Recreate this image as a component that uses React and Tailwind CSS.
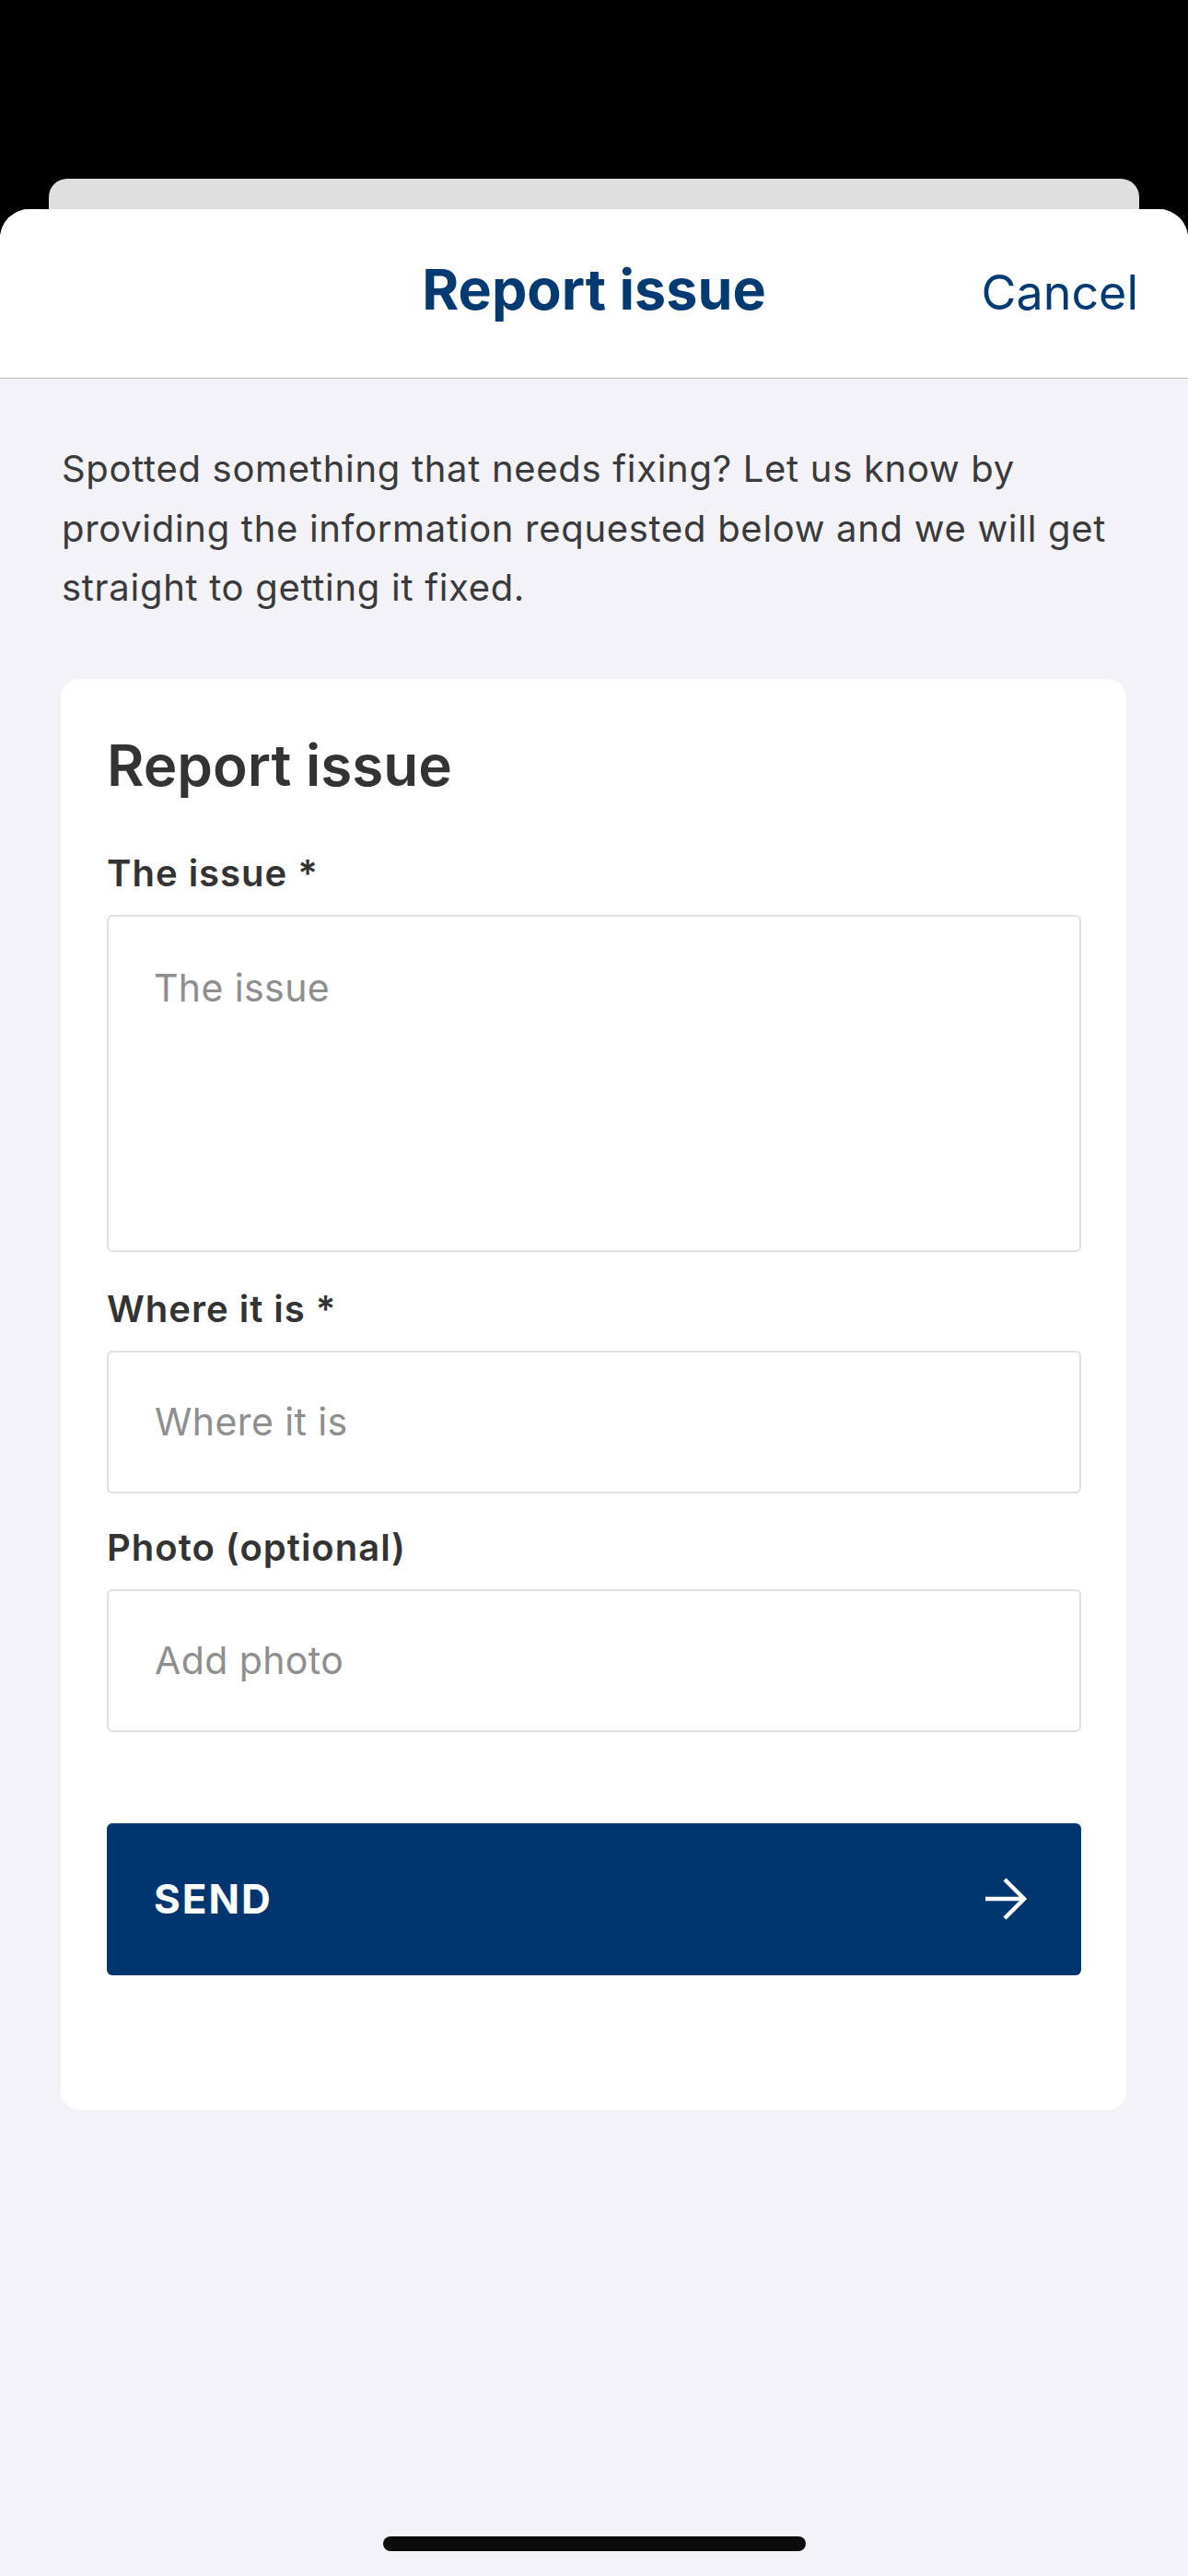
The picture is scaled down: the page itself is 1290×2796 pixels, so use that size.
import React from "react";

function ArrowRight() {
  return (
    <svg width="48" height="48" viewBox="0 0 48 48" fill="none" className="block">
      <path d="M2 24 H44" stroke="white" strokeWidth="4.5" />
      <path d="M23 3 L44 24 L23 45" stroke="white" strokeWidth="4.5" strokeLinejoin="miter" />
    </svg>
  );
}

function Field({ label, placeholder, tall, mt }) {
  return (
    <div>
      <div className={`${mt} text-[40px] leading-none font-semibold tracking-[1px] text-[#333333]`}>{label}</div>
      {tall ? (
        <div className="mt-[25px] h-[366px] rounded-[6px] border-2 border-[#e0e0e0] pl-[49px] pt-[57px] text-[41px] leading-none tracking-[0.4px] text-[#8e8e8e]">
          {placeholder}
        </div>
      ) : (
        <div className="mt-[25px] flex h-[155px] items-center rounded-[6px] border-2 border-[#e0e0e0] pl-[50px] text-[41px] leading-none tracking-[0.4px] text-[#8e8e8e]">
          {placeholder}
        </div>
      )}
    </div>
  );
}

export default function App() {
  return (
    <div className="flex h-[2796px] w-[1290px] flex-col overflow-hidden bg-black pt-[194px] font-['Inter',sans-serif]">
      <div className="mx-[53px] h-[60px] shrink-0 rounded-t-[20px] bg-[#dfdfdf]" />
      <div className="relative -mt-[27px] flex flex-1 flex-col overflow-hidden rounded-t-[32px] bg-[#f2f2f7]">
        <header className="grid h-[184px] shrink-0 grid-cols-[1fr_auto_1fr] items-baseline border-b border-[#c2c2c6] bg-white pt-[57px]">
          <div />
          <div className="text-[61px] leading-none font-bold text-[#043a72]">Report issue</div>
          <div className="justify-self-end pr-[54px] text-[52px] leading-none text-[#043a72]">Cancel</div>
        </header>

        <p className="px-[67px] pt-[66px] text-[40px] leading-[64.5px] tracking-[0.7px] text-[#3a3a3c]">
          Spotted something that needs fixing? Let us know by
          <br />
          providing the information requested below and we will get
          <br />
          straight to getting it fixed.
        </p>

        <div className="ml-[66px] mr-[67px] mt-[66px] rounded-[20px] bg-white pl-[50px] pr-[49px] pt-[63px] pb-[146px]">
          <h1 className="text-[62px] leading-none font-semibold text-[#333333]">Report issue</h1>
          <Field mt="mt-[66px]" label="The issue *" placeholder="The issue" tall />
          <Field mt="mt-[42px]" label="Where it is *" placeholder="Where it is" />
          <Field mt="mt-[39px]" label="Photo (optional)" placeholder="Add photo" />
          <button className="mt-[99px] flex h-[165px] w-full items-center justify-between rounded-[6px] bg-[#00366f] pl-[51px] pr-[58px]">
            <span className="text-[44px] leading-none font-bold tracking-[2px] text-white">SEND</span>
            <ArrowRight />
          </button>
        </div>

        <div className="flex-1" />
        <div className="mx-auto mb-[27px] h-[16px] w-[459px] rounded-full bg-[#0b0b0b]" />
      </div>
    </div>
  );
}
